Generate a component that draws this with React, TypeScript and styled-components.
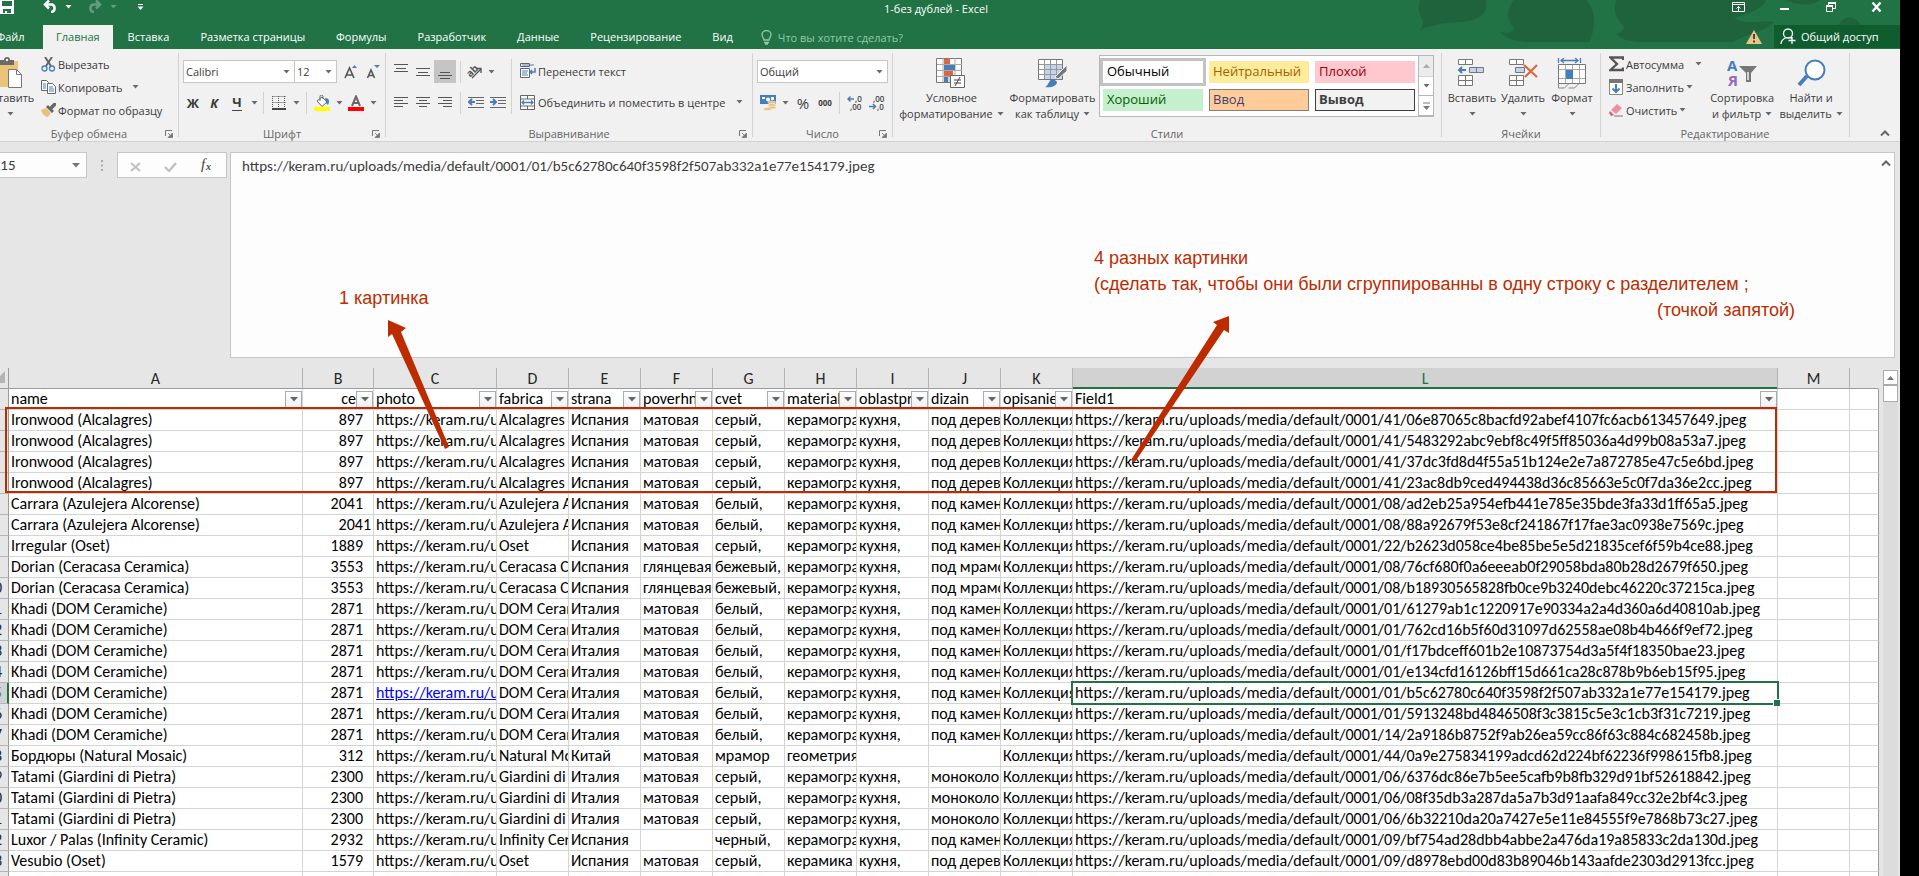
import React from 'react';
import styled, { createGlobalStyle, css } from 'styled-components';

const ui = '"Open Sans", "Noto Sans", sans-serif';
const sheet = 'Calibri, Carlito, Lato, sans-serif';
const green = '#217346';
const red = '#bc2c00';
const blue = '#457eba';

const GlobalStyle = createGlobalStyle`
  * { box-sizing: border-box; }
  html, body, #root { height: 100%; }
  body { margin: 0; background: #000; overflow: hidden; font-family: ${ui}; font-size: 11px; color: #3c3c3c; }
  button, input, select, textarea { font: inherit; color: inherit; margin: 0; padding: 0; border: 0; background: none; border-radius: 0; outline: 0; }
  svg { display: block; flex: none; }
`;

/* ---------- window ---------- */

const Window = styled.main`
  position: relative;
  display: flex;
  flex-direction: column;
  height: 100vh;
  margin-right: 19px;
  overflow: hidden;
  background: #e6e6e6;
`;

const Head = styled.header`
  position: relative;
  flex: none;
  color: #fff;
  background: ${green};
`;

const HeadPattern = styled.svg`
  position: absolute;
  top: 0;
  right: 0;
`;

const TitleBar = styled.div`
  position: relative;
  display: grid;
  grid-template-columns: 1fr auto 1fr;
  height: 25px;
  padding-right: 16px;
`;

const QuickAccess = styled.div`
  display: flex;
  align-items: flex-start;
`;

const QuickButton = styled.button<{ $w: number; $dim?: boolean }>`
  display: flex;
  width: ${p => p.$w}px;
  color: #fff;
  opacity: ${p => (p.$dim ? 0.3 : 1)};
`;

const Title = styled.h1`
  margin: 0;
  padding-right: 12px;
  font-size: 11px;
  font-weight: 400;
  line-height: 18px;
`;

const WindowButtons = styled.div`
  display: flex;
  justify-content: flex-end;
  gap: 32px;
  padding-top: 1px;
`;

const WindowButton = styled.button`
  display: flex;
  width: 14px;
  height: 14px;
  color: #fff;
`;

const TabBar = styled.nav`
  position: relative;
  display: flex;
  align-items: stretch;
  height: 24px;
`;

const Tab = styled.button<{ $active?: boolean; $file?: boolean }>`
  padding: 0 16px 0 15px;
  color: #fff;
  line-height: 24px;
  white-space: nowrap;
  ${p => p.$active && css`padding: 0 13px; color: ${green}; background: #f1f1f1;`}
  ${p => p.$file && css`width: 64px; margin-left: -21px; text-align: center;`}
`;

const Tell = styled.label`
  display: flex;
  align-items: center;
  gap: 6px;
  margin-left: 12px;
  flex: 1;
  color: #a0d0b0;
`;

const TellInput = styled.input`
  width: 160px;
  color: #a0d0b0;
  &::placeholder { color: #92c9a6; opacity: 1; }
`;

const Share = styled.button`
  display: flex;
  align-items: center;
  gap: 4px;
  width: 126px;
  height: 23px;
  margin-left: 12px;
  padding-left: 6px;
  color: #fff;
  background: #0f5c2f;
`;

/* ---------- ribbon ---------- */

const Ribbon = styled.section`
  display: flex;
  flex: none;
  height: 93px;
  border-bottom: 1px solid #d2d2d2;
  background: #f1f1f1;
`;

const GroupBox = styled.div<{ $w: number }>`
  display: flex;
  flex-direction: column;
  flex: none;
  width: ${p => p.$w}px;
  height: 84px;
  margin-top: 4px;
  border-right: 1px solid #d2d2d2;
`;

const GroupBody = styled.div`
  display: flex;
  flex: 1;
`;

const GroupFoot = styled.div`
  display: grid;
  grid-template-columns: 16px 1fr 16px;
  align-items: center;
  height: 16px;
  margin-bottom: -4px;
  flex: none;
  color: #666;
  text-align: center;
`;

const Stack = styled.div<{ $pad?: number }>`
  display: flex;
  flex-direction: column;
  padding-left: ${p => p.$pad ?? 0}px;
`;

const TwoRows = styled.div<{ $pad?: number }>`
  display: flex;
  flex-direction: column;
  gap: 8px;
  padding: 7px 0 0 ${p => p.$pad ?? 0}px;
`;

const Row = styled.div<{ $gap?: number }>`
  display: flex;
  align-items: center;
  gap: ${p => p.$gap ?? 0}px;
  height: 23px;
`;

const SmallButton = styled.button`
  display: flex;
  align-items: center;
  gap: 2px;
  height: 23px;
  padding-bottom: 1px;
  white-space: nowrap;
`;

const IconButton = styled.button<{ $w?: number; $on?: boolean }>`
  display: flex;
  align-items: center;
  justify-content: center;
  width: ${p => p.$w ?? 22}px;
  height: 23px;
  background: ${p => (p.$on ? '#c5c5c5' : 'none')};
`;

const Glyph = styled.span<{ $size?: number; $italic?: boolean; $under?: boolean; $light?: boolean }>`
  font-size: ${p => p.$size ?? 13}px;
  font-weight: ${p => (p.$light ? 400 : 700)};
  line-height: 16px;
  font-style: ${p => (p.$italic ? 'italic' : 'normal')};
  border-bottom: ${p => (p.$under ? '1px solid #444' : '0')};
`;

const Split = styled.span<{ $h?: number; $m?: number }>`
  width: 1px;
  height: ${p => p.$h ?? 22}px;
  margin: 0 ${p => p.$m ?? 0}px;
  background: #d2d2d2;
`;

const TallSplit = styled.span`
  width: 1px;
  height: 55px;
  margin: 6px 0 0 2px;
  background: #d2d2d2;
`;

const BigButton = styled.button<{ $w: number; $clip?: boolean }>`
  display: flex;
  flex-direction: column;
  align-items: center;
  width: ${p => p.$w}px;
  height: 72px;
  padding-top: 3px;
  margin-left: ${p => (p.$clip ? -16 : 0)}px;
  line-height: 16px;
  white-space: nowrap;
`;

const BigIcon = styled.span`
  display: flex;
  justify-content: center;
  align-items: center;
  height: 34px;
`;

const BigCaret = styled.span`
  display: flex;
  align-items: center;
  gap: 4px;
  height: 16px;
`;

const Picker = styled.label<{ $w: number }>`
  position: relative;
  display: flex;
  align-items: center;
  width: ${p => p.$w}px;
  height: 23px;
  border: 1px solid #c6c6c6;
  background: #fff;
  & + & { margin-left: -1px; }
  svg { position: absolute; right: 4px; pointer-events: none; }
`;

const PickerSelect = styled.select`
  width: 100%;
  height: 21px;
  padding-left: 2px;
  appearance: none;
`;

const Gallery = styled.div`
  display: flex;
  width: 335px;
  height: 62px;
  margin: 2px 0 0 4px;
  border: 1px solid #b4b8bc;
  background: #fff;
`;

const GalleryGrid = styled.div`
  display: grid;
  flex: 1;
  grid-template-columns: repeat(3, 100px);
  grid-auto-rows: 22px;
  gap: 6px;
  padding: 5px 0 0 3px;
`;

const StyleCell = styled.button<{ $bg: string; $fg: string; $line?: string; $bold?: boolean; $on?: boolean }>`
  padding: 0 0 2px 3px;
  text-align: left;
  font-size: 13px;
  line-height: 18px;
  font-weight: ${p => (p.$bold ? 700 : 400)};
  color: ${p => p.$fg};
  background: ${p => p.$bg};
  border: 1px solid ${p => p.$line ?? p.$bg};
  ${p => p.$on && css`outline: 3px solid #c3c3c3;`}
`;

const GallerySide = styled.div`
  display: grid;
  grid-template-rows: 21px 19px 20px;
  width: 15px;
  border-left: 1px solid #b4b8bc;
`;

const GalleryStep = styled.button<{ $off?: boolean }>`
  display: flex;
  align-items: center;
  justify-content: center;
  border-bottom: 1px solid #b4b8bc;
  background: ${p => (p.$off ? '#e1e1e1' : '#fff')};
  opacity: ${p => (p.$off ? 0.6 : 1)};
`;

const RibbonEnd = styled.div`
  display: flex;
  flex: 1;
  align-items: flex-end;
  justify-content: flex-end;
  padding: 0 8px 1px 0;
`;

/* ---------- formula bar ---------- */

const FormulaBar = styled.section`
  display: flex;
  flex: none;
  align-items: flex-start;
  height: 226px;
  padding: 10px 5px 10px 0;
`;

const NameBox = styled.label`
  display: flex;
  align-items: center;
  width: 107px;
  height: 26px;
  margin-left: -20px;
  padding: 0 6px 0 13px;
  border: 1px solid #c6c6c6;
  background: #fdfdfd;
  font-family: ${sheet};
  font-size: 15px;
`;

const NameInput = styled.input`
  flex: 1;
  min-width: 0;
`;

const Dots = styled.span`
  width: 30px;
  display: flex;
  justify-content: center;
  padding-top: 8px;
`;

const EntryButtons = styled.div`
  display: flex;
  align-items: center;
  justify-content: space-around;
  width: 110px;
  height: 26px;
  margin-right: 3px;
  border: 1px solid #c6c6c6;
  background: #fdfdfd;
`;

const FormulaBox = styled.div`
  display: flex;
  flex: 1;
  height: 206px;
  padding: 3px 1px 3px 11px;
  border: 1px solid #c6c6c6;
  background: #fdfdfd;
`;

const FormulaText = styled.textarea`
  flex: 1;
  resize: none;
  overflow: hidden;
  font-family: ${sheet};
  font-size: 15px;
  line-height: 20px;
`;

const PlainButton = styled.button`
  display: flex;
  justify-content: center;
  width: 14px;
  height: 14px;
  padding-top: 4px;
`;

/* ---------- sheet ---------- */

const SheetArea = styled.section`
  display: flex;
  flex: 1;
  min-height: 0;
  overflow: hidden;
`;

const GridClip = styled.div`
  flex: 1;
  min-width: 0;
  overflow: hidden;
`;

const Table = styled.table`
  width: calc(100% + 20px);
  margin-left: -20px;
  table-layout: fixed;
  border-collapse: separate;
  border-spacing: 0;
  font-family: ${sheet};
  font-size: 16px;
  line-height: 20px;
  color: #000;
`;

const ColHead = styled.th<{ $on?: boolean }>`
  height: 21px;
  padding: 2px 0 0;
  font-weight: 400;
  line-height: 18px;
  color: ${p => (p.$on ? green : '#262626')};
  background: ${p => (p.$on ? '#d2d2d2' : '#e6e6e6')};
  border-right: 1px solid #b4b4b4;
  border-bottom: 1px solid ${p => (p.$on ? green : '#9b9b9b')};
  box-shadow: ${p => (p.$on ? `inset 0 -1px ${green}` : 'none')};
  &:last-child { border-right-color: #e6e6e6; }
`;

const Corner = styled.td`
  border-right: 1px solid #9b9b9b;
  border-bottom: 1px solid #9b9b9b;
  padding: 0 3px 3px 0;
  svg { margin-left: auto; }
`;

const RowHead = styled.th<{ $on?: boolean }>`
  height: 21px;
  padding: 0;
  font-weight: 400;
  text-align: center;
  color: ${p => (p.$on ? green : '#262626')};
  background: ${p => (p.$on ? '#d2d2d2' : '#e6e6e6')};
  border-right: ${p => (p.$on ? `2px solid ${green}` : '1px solid #9b9b9b')};
  border-bottom: 1px solid #b4b4b4;
`;

const Cell = styled.td<{ $sel?: boolean }>`
  height: 21px;
  padding: 0;
  background: #fff;
  border-right: 1px solid #d4d4d4;
  border-bottom: 1px solid #d4d4d4;
  &:last-child { border-right-color: #9b9b9b; }
  ${p => p.$sel && css`
    position: relative;
    &::before {
      content: '';
      position: absolute;
      inset: -2px -2px -2px -2px;
      border: 2px solid ${green};
    }
    &::after {
      content: '';
      position: absolute;
      right: -3px;
      bottom: -3px;
      width: 6px;
      height: 6px;
      border: solid #fff;
      border-width: 1px 0 0 1px;
      background: ${green};
    }
  `}
`;

const CellText = styled.div<{ $num?: boolean; $tight?: boolean }>`
  height: 20px;
  padding: 0 ${p => (p.$num && !p.$tight ? 10 : p.$num ? 2 : 0)}px 0 2px;
  overflow: hidden;
  white-space: nowrap;
  text-align: ${p => (p.$num ? 'right' : 'left')};
`;

const CellLink = styled.a`
  color: #0000ff;
`;

const FilterCell = styled.div`
  display: flex;
  height: 20px;
`;

const FilterName = styled.span<{ $right?: boolean }>`
  flex: 1;
  min-width: 0;
  padding-left: 2px;
  overflow: hidden;
  white-space: nowrap;
  text-align: ${p => (p.$right ? 'right' : 'left')};
`;

const FilterButton = styled.button`
  display: flex;
  align-items: center;
  justify-content: center;
  flex: none;
  width: 17px;
  height: 17px;
  margin-top: 2px;
  border: 1px solid #a6abb5;
  background: linear-gradient(#fff, #eef0f4);
`;

const ScrollBar = styled.div`
  display: flex;
  flex-direction: column;
  flex: none;
  width: 15px;
  margin: 2px 2px 0 4px;
  background: #dcdcdc;
`;

const ScrollUp = styled.button`
  display: flex;
  align-items: center;
  justify-content: center;
  height: 15px;
  border: 1px solid #ababab;
  background: #fff;
`;

const ScrollThumb = styled.span`
  height: 17px;
  border: 1px solid #ababab;
  background: #fff;
`;

/* ---------- notes drawn over the sheet ---------- */

const Frame = styled.div`
  position: absolute;
  left: 5px;
  top: 407px;
  width: 1772px;
  height: 86px;
  border: 2px solid ${red};
  pointer-events: none;
`;

const Note = styled.p<{ $x: number; $y: number }>`
  position: absolute;
  left: ${p => p.$x}px;
  top: ${p => p.$y}px;
  margin: 0;
  color: ${red};
  font-family: "Liberation Sans", Arial, sans-serif;
  font-size: 18px;
  line-height: 26px;
  white-space: nowrap;
`;

const NoteEnd = styled.span`
  display: block;
  width: 701px;
  text-align: right;
`;

const Arrows = styled.svg`
  position: absolute;
  left: 0;
  top: 0;
  pointer-events: none;
`;

/* ---------- icons ---------- */

const Caret = ({ c = '#6a6a6a' }: { c?: string }) => (
  <svg width="7" height="4" viewBox="0 0 7 4"><path d="M0.5 0h6l-3 3.5z" fill={c} /></svg>
);
const CaretUp = () => <svg width="7" height="4"><path d="M0 4h7l-3.500-4z" fill="#777" /></svg>;
const ChevronUp = () => (
  <svg width="10" height="6"><path d="M1 5.500l4-4 4 4" fill="none" stroke="#666" strokeWidth="2" /></svg>
);
const Launcher = () => (
  <svg width="8" height="8"><path d="M.5 6V.5H7" stroke="#777" fill="none" /><path d="M3 3l3 3M7.500 3v4.500H3z" stroke="#777" fill="#777" strokeWidth=".8" /></svg>
);
const SaveIcon = () => (
  <svg width="14" height="14"><path fillRule="evenodd" d="M0 0h14v14H0zM2 1v5h10V1zM3 9v4h2v-2h2v2h4V9z" fill="#fff" /></svg>
);
const UndoIcon = ({ flip }: { flip?: boolean }) => (
  <svg width="15" height="13" viewBox="0 0 15 13">
    <g transform={flip ? 'translate(15 0) scale(-1 1)' : undefined} fill="none" stroke="#fff" strokeWidth="2.500">
      <path d="M2 4.500h7a4 4 0 0 1 0 7.500H8" /><path d="M6 .5l-4 4 4 4" />
    </g>
  </svg>
);

const PasteIcon = () => (
  <svg width="34" height="32" viewBox="0 0 34 32">
    <path d="M3 4h22v26H3z" fill="#ecc478" /><path d="M7 3h4a3 3 0 0 1 6 0h4v5H7z" fill="#6a6a6a" /><circle cx="14" cy="3" r="1.200" fill="#f1f1f1" />
    <path d="M15.500 12.500h8l5 5v13h-13z" fill="#fff" stroke="#777" /><path d="M23.500 12.500v5h5" fill="none" stroke="#777" />
  </svg>
);
const CutIcon = () => (
  <svg width="15" height="15"><path d="M4 0l6 9M11 0L5 9" stroke="#666" strokeWidth="2" /><circle cx="3.500" cy="11.500" r="2.500" fill="none" stroke={blue} strokeWidth="1.300" /><circle cx="11" cy="11.500" r="2.500" fill="none" stroke={blue} strokeWidth="1.300" /></svg>
);
const CopyIcon = () => (
  <svg width="15" height="14"><path d="M.5.500h5l2 2v8h-7z" fill="#fff" stroke="#666" /><path d="M2 4h3M2 6h3M2 8h3" stroke={blue} /><path d="M6.500 3.500h5l3 3v7h-8z" fill="#fff" stroke="#666" /><path d="M8 7h4M8 9h5M8 11h5" stroke={blue} /></svg>
);
const BrushIcon = () => (
  <svg width="15" height="14"><path d="M0 7l5-2 5 5-3 4c-3 0-6-3-7-7z" fill="#ecc07a" /><path d="M5 4l2-2 6 6-2 2z" fill="#666" /><path d="M10 4l4-4 1 1-4 4z" stroke="#666" strokeWidth="2" /></svg>
);
const AlignIcon = ({ kind }: { kind: string }) => {
  const rows: Record<string, string> = {
    top: 'M0 .5h14M2 4.500h10M0 7.500h14', mid: 'M0 4.500h14M2 8.500h10M0 11.500h14', bottom: 'M2 8.500h10M0 11.500h14M2 14.500h10',
    left: 'M0 2.500h14M0 5.500h9M0 8.500h14M0 11.500h9', center: 'M0 2.500h14M3 5.500h8M0 8.500h14M3 11.500h8', right: 'M0 2.500h14M5 5.500h9M0 8.500h14M5 11.500h9',
  };
  return <svg width="14" height="16"><path d={rows[kind]} stroke="#555" /></svg>;
};
const OrientIcon = () => (
  <svg width="16" height="16"><text x="0" y="10" fontSize="10" fontWeight="700" fill="#555" transform="rotate(-45 6 8)">ab</text><path d="M5 14L14 5M14 9V4.500H9.500" stroke="#555" fill="none" strokeWidth="1.300" /></svg>
);
const IndentIcon = ({ out }: { out?: boolean }) => (
  <svg width="16" height="14"><path d="M0 1.500h16M8 4.500h8M8 7.500h8M0 11.500h16" stroke="#666" />
    {out ? <path d="M7 6H1M4 3L1 6l3 3" stroke={blue} fill="none" strokeWidth="2" /> : <path d="M0 6h6M3 3l3 3-3 3" stroke={blue} fill="none" strokeWidth="2" />}
  </svg>
);
const WrapIcon = () => (
  <svg width="16" height="16"><path d="M.5.500h9v3h-9zM.5 5.500h9v9h-9z" fill="#fff" stroke="#666" /><path d="M2 2h12M2 8h6M2 10h5M2 12h6" stroke={blue} /><path d="M15 5v4h-5M12 7l-2 2 2 2" fill="none" stroke={blue} strokeWidth="1.500" /></svg>
);
const MergeIcon = () => (
  <svg width="16" height="15"><path d="M.5.500h14v14H.5zM.5 4h14M.5 11h14M7.500.500V4M7.500 11v3" fill="#fff" stroke="#666" /><path d="M2 7.500h11M4 5.500l-2 2 2 2M11 5.500l2 2-2 2" fill="none" stroke={blue} strokeWidth="1.300" /></svg>
);
const BordersIcon = () => <svg width="14" height="14"><path d="M.5.500h13M.5 6.500h13M.5 0v13M6.500 0v13M12.500 0v13" stroke="#555" strokeDasharray="1 1" /><path d="M0 13h14" stroke="#444" strokeWidth="2" /></svg>;
const FillIcon = () => (
  <svg width="16" height="16"><path d="M3 6l5-4 5 5-5 4.500z" fill="#fff" stroke="#666" /><path d="M6 6V1.500a1.500 1.500 0 0 1 3 0V4" fill="none" stroke="#666" /><path d="M11 3c4 0 5 3 3 7l-2-2z" fill={blue} /><path d="M0 12h16v4H0z" fill="#ff0" /></svg>
);
const FontColorIcon = () => (
  <svg width="16" height="16"><path d="M4 11L8 1.500 12 11M5.500 8h5" stroke="#666" strokeWidth="2" fill="none" /><path d="M0 12h16v4H0z" fill="red" /></svg>
);
const GrowIcon = ({ down }: { down?: boolean }) => (
  <svg width="14" height="14"><path d={down ? 'M1.500 13L5 5l3.500 8M3 10.500h4' : 'M1 13L5.500 3 10 13M2.500 10h6'} stroke="#555" strokeWidth="1.600" fill="none" /><path d={down ? 'M8 0h6l-3 3z' : 'M8 3h5l-2.500-3z'} fill={blue} /></svg>
);
const MoneyIcon = () => (
  <svg width="17" height="16"><path d="M0 0h16v9H0z" fill={blue} /><path d="M2 2h3v2H2zM11 2h3v3h-3z" fill="#fff" /><circle cx="8" cy="4.500" r="2" fill="#fff" /><g fill="#eabf78" stroke="#f1f1f1" strokeWidth=".6"><ellipse cx="12" cy="7.500" rx="4" ry="1.500" /><ellipse cx="12" cy="10" rx="4" ry="1.500" /><ellipse cx="12" cy="12.500" rx="4" ry="1.500" /><ellipse cx="7.500" cy="14" rx="4" ry="1.500" /></g></svg>
);
const DecimalIcon = ({ less }: { less?: boolean }) => (
  <svg width="16" height="16">
    <text x={less ? 4 : 8} y="7" fontSize="8" fontWeight="600" fill="#444">{less ? ',00' : ',0'}</text>
    <text x={less ? 8 : 3} y="15" fontSize="8" fontWeight="600" fill="#444">{less ? ',0' : ',00'}</text>
    {less ? <path d="M0 11.500h6M4 9l2.500 2.500L4 14" stroke={blue} fill="none" strokeWidth="1.500" /> : <path d="M7 4H1M3.500 1.500L1 4l2.500 2.500" stroke={blue} fill="none" strokeWidth="1.500" />}
  </svg>
);
const CondIcon = () => (
  <svg width="31" height="31"><path d="M.5.500h25v24H.5z" fill="#fff" stroke="#777" /><path d="M7 0v24M13 0v24M19 0v24M1 6.500h25M1 12.500h25M1 18.500h25" stroke="#aaa" /><path d="M8 1h6v5H8zM8 13h9v5H8z" fill="#dd6641" /><path d="M8 7h11v5H8zM8 19h4v5H8z" fill={blue} /><path d="M14.500 17.500h14v12h-14z" fill="#fff" stroke="#666" /><path d="M18 22h7M18 25h7M24 19l-5 9" stroke="#444" /></svg>
);
const TableIcon = () => (
  <svg width="32" height="30"><path d="M1.500 1.500h24v20h-24z" fill="#fff" stroke="#777" /><path d="M8 7h17v14H8z" fill="#c3d5ec" /><path d="M7.500 2v19M13.500 2v19M19.500 2v19M2 6.500h23M2 11.500h23M2 16.500h23" stroke="#999" /><path d="M30 7v6l-9 8-3-2z" fill="#777" stroke="#f1f1f1" /><path d="M8 29c4-1 3-8 9-8l3 3c0 4-6 6-12 5z" fill={blue} /></svg>
);
const InsertIcon = ({ del }: { del?: boolean }) => (
  <svg width="30" height="30"><path d="M1.500 1.500h14v5h-14zM8.500 1.500v5M1.500 17.500h14v10h-14zM8.500 17.500v10M1.500 22.500h14" fill="#fff" stroke="#777" />
    {del ? <><path d="M7.500 9.500h9v5h-9z" fill="#c3d5ec" stroke="#777" /><path d="M16 7l13 12M29 7L17 19" stroke="#dd6641" strokeWidth="2.200" /></>
      : <><path d="M12.500 9.500h14v5h-14zM19.500 9.500v5" fill="#c3d5ec" stroke="#777" /><path d="M9 12H2M5 9l-3 3 3 3" stroke={blue} fill="none" strokeWidth="2" /></>}
  </svg>
);
const FormatIcon = () => (
  <svg width="30" height="31"><path d="M1.500 0v5M23.500 0v5M4 2.500h17M7 0L4 2.500 7 5M18 0l3 2.500L18 5" stroke={blue} fill="none" strokeWidth="1.300" /><path d="M1.500 6.500h27v19h-27z" fill="#fff" stroke="#777" /><path d="M8.500 7v18M15.500 7v18M22.500 7v18M2 11.500h26M2 20.500h26" stroke="#aaa" /><path d="M9 12h7v9H9z" fill={blue} /><path d="M1.500 26v4h6l4-4M11.500 30h6l4-4" stroke="#888" fill="none" /></svg>
);
const SumIcon = () => <svg width="15" height="16"><path d="M14 4V1.500H1.500L8 8l-6.500 6H14V11.500" fill="none" stroke="#555" strokeWidth="2.300" /></svg>;
const FillDownIcon = () => <svg width="15" height="16"><path d="M.5.500h13v15H.5z" fill="#fff" stroke="#888" /><path d="M0 0h14v4H0z" fill="#777" /><path d="M7 5v8M3.500 9.500L7 13l3.500-3.500" stroke={blue} fill="none" strokeWidth="2" /></svg>;
const EraseIcon = () => <svg width="15" height="14"><path d="M8 1l5 4-6 6-5-4z" fill="#ee8fa0" /><path d="M1 8l4 4-3 1-2-3z" fill="#e05a70" /><path d="M5 13h9" stroke="#777" /></svg>;
const SortIcon = () => (
  <svg width="30" height="30"><text x="0" y="13" fontSize="15" fontWeight="700" fill={blue}>А</text><text x="1" y="28" fontSize="15" fontWeight="700" fill="#9a64b8">Я</text><path d="M12 8h18l-6 7v9h-5v-9z" fill="#777" /><path d="M21 14v8" stroke="#f1f1f1" strokeWidth="1.500" /></svg>
);
const FindIcon = () => <svg width="29" height="30"><path d="M2 27l8-9" stroke={blue} strokeWidth="4" /><circle cx="18" cy="12" r="9.500" fill="#fff" stroke={blue} strokeWidth="2" /></svg>;
const WarnIcon = () => <svg width="16" height="14"><path d="M8 0l8 14H0z" fill="#eec486" /><path d="M8 4v5M8 10.500v2" stroke="#444" strokeWidth="2" /></svg>;
const PersonIcon = () => <svg width="17" height="17"><circle cx="8" cy="5.500" r="4.500" fill="none" stroke="#fff" strokeWidth="1.300" /><path d="M1 16c0-3 2-5 4.500-6M10.500 9.500l2 2M12 9v7M8.500 12.500h7" fill="none" stroke="#fff" strokeWidth="1.300" /></svg>;
const BulbIcon = () => <svg width="11" height="15"><path d="M3 10C3 8 1 7.500 1 4.500a4.500 4 0 0 1 9 0C10 7.500 8 8 8 10zM3 12.500h5M4 14h3" fill="none" stroke="#92c9a6" strokeWidth="1.300" /></svg>;

/* ---------- data ---------- */

const columns: [string, number, string][] = [
  ['A', 294, 'name'], ['B', 71, 'cena'], ['C', 123, 'photo'], ['D', 72, 'fabrica'], ['E', 72, 'strana'], ['F', 72, 'poverhnost'],
  ['G', 72, 'cvet'], ['H', 72, 'material'], ['I', 72, 'oblastprim'], ['J', 72, 'dizain'], ['K', 72, 'opisanie'], ['L', 705, 'Field1'], ['M', 72, ''],
];

const url = 'https://keram.ru/uploads/media/default/0001/';
const iron = ['Ironwood (Alcalagres)', '897', 'Alcalagres', 'Испания', 'матовая', 'серый,', 'керамогранит', 'кухня,', 'под дерево', 'Коллекция'];
const carrara = ['Carrara (Azulejera Alcorense)', '2041', 'Azulejera Alcorense', 'Испания', 'матовая', 'белый,', 'керамогранит', 'кухня,', 'под камень', 'Коллекция'];
const dorian = ['Dorian (Ceracasa Ceramica)', '3553', 'Ceracasa Ceramica', 'Испания', 'глянцевая', 'бежевый,', 'керамогранит', 'кухня,', 'под мрамор', 'Коллекция'];
const khadi = ['Khadi (DOM Ceramiche)', '2871', 'DOM Ceramiche', 'Италия', 'матовая', 'белый,', 'керамогранит', 'кухня,', 'под камень', 'Коллекция'];
const tatami = ['Tatami (Giardini di Pietra)', '2300', 'Giardini di Pietra', 'Италия', 'матовая', 'серый,', 'керамогранит', 'кухня,', 'моноколор', 'Коллекция'];

const rows: [string[], string][] = [
  [iron, '41/06e87065c8bacfd92abef4107fc6acb613457649'],
  [iron, '41/5483292abc9ebf8c49f5ff85036a4d99b08a53a7'],
  [iron, '41/37dc3fd8d4f55a51b124e2e7a872785e47c5e6bd'],
  [iron, '41/23ac8db9ced494438d36c85663e5c0f7da36e2cc'],
  [carrara, '08/ad2eb25a954efb441e785e35bde3fa33d1ff65a5'],
  [carrara, '08/88a92679f53e8cf241867f17fae3ac0938e7569c'],
  [['Irregular (Oset)', '1889', 'Oset', 'Испания', 'матовая', 'серый,', 'керамогранит', 'кухня,', 'под камень', 'Коллекция'], '22/b2623d058ce4be85be5e5d21835cef6f59b4ce88'],
  [dorian, '08/76cf680f0a6eeeab0f29058bda80b28d2679f650'],
  [dorian, '08/b18930565828fb0ce9b3240debc46220c37215ca'],
  [khadi, '01/61279ab1c1220917e90334a2a4d360a6d40810ab'],
  [khadi, '01/762cd16b5f60d31097d62558ae08b4b466f9ef72'],
  [khadi, '01/f17bdceff601b2e10873754d3a5f4f18350bae23'],
  [khadi, '01/e134cfd16126bff15d661ca28c878b9b6eb15f95'],
  [khadi, '01/b5c62780c640f3598f2f507ab332a1e77e154179'],
  [khadi, '01/5913248bd4846508f3c3815c5e3c1cb3f31c7219'],
  [khadi, '14/2a9186b8752f9ab26ea59cc86f63c884c682458b'],
  [['Бордюры (Natural Mosaic)', '312', 'Natural Mosaic', 'Китай', 'матовая', 'мрамор', 'геометрия', '', '', 'Коллекция'], '44/0a9e275834199adcd62d224bf62236f998615fb8'],
  [tatami, '06/6376dc86e7b5ee5cafb9b8fb329d91bf52618842'],
  [tatami, '06/08f35db3a287da5a7b3d91aafa849cc32e2bf4c3'],
  [tatami, '06/6b32210da20a7427e5e11e84555f9e7868b73c27'],
  [['Luxor / Palas (Infinity Ceramic)', '2932', 'Infinity Ceramic', 'Испания', '', 'черный,', 'керамогранит', 'кухня,', 'под камень', 'Коллекция'], '09/bf754ad28dbb4abbe2a476da19a85833c2da130d'],
  [['Vesubio (Oset)', '1579', 'Oset', 'Испания', 'матовая', 'серый,', 'керамика', 'кухня,', 'под дерево', 'Коллекция'], '09/d8978ebd00d83b89046b143aafde2303d2913fcc'],
];

/* ---------- composed parts ---------- */

const Group = ({ w, label, launch, children }: { w: number; label: string; launch?: boolean; children: React.ReactNode }) => (
  <GroupBox $w={w}>
    <GroupBody>{children}</GroupBody>
    <GroupFoot><span /><span>{label}</span>{launch && <PlainButton aria-label={label}><Launcher /></PlainButton>}</GroupFoot>
  </GroupBox>
);

const Big = ({ w, icon, lines, clip }: { w: number; icon: React.ReactNode; lines: string[]; clip?: boolean }) => (
  <BigButton $w={w} $clip={clip}>
    <BigIcon>{icon}</BigIcon>
    <span>{lines[0]}</span>
    <BigCaret>{lines[1]}<Caret /></BigCaret>
  </BigButton>
);

const Pick = ({ w, label, value }: { w: number; label: string; value: string }) => (
  <Picker $w={w}><PickerSelect aria-label={label}><option>{value}</option></PickerSelect><Caret /></Picker>
);

const tabs = ['Вставка', 'Разметка страницы', 'Формулы', 'Разработчик', 'Данные', 'Рецензирование', 'Вид'];

export default function App() {
  return (
    <>
      <GlobalStyle />
      <Window>
        <Head>
          <HeadPattern width="520" height="45" viewBox="0 0 520 45">
            <g fill="#1f633d">
              <path d="M40 0h66c2 12-4 20-24 22-20 0-30 4-42 8 4-6 4-8 2-12-4-6-4-12-2-18z" />
              <path d="M134 0h72c10 10 10 24 4 42h-60c-14 0-26-4-30-10 8 2 14 0 14-4-8-8-8-20 0-28z" />
              <path d="M236 0h150c-4 10-20 14-32 18 14 8 26 2 40 4-12 12-30 12-40 20H262c-10 0-20-2-26-8 6-2 8-4 8-8-10-8-10-16-8-26z" />
              <path d="M406 0h34c-6 6-22 6-34 0zM458 28c2-14 20-14 24 0z" />
            </g>
          </HeadPattern>
          <TitleBar>
            <QuickAccess>
              <QuickButton $w={43} aria-label="Сохранить"><SaveIcon /></QuickButton>
              <QuickButton $w={22} aria-label="Отменить"><UndoIcon /></QuickButton>
              <QuickButton $w={22} aria-label="Список отмены"><svg width="7" height="9"><path d="M.5 5h6l-3 3.500z" fill="#fff" /></svg></QuickButton>
              <QuickButton $w={23} $dim aria-label="Вернуть"><UndoIcon flip /></QuickButton>
              <QuickButton $w={27} $dim aria-label="Список возврата"><svg width="7" height="9"><path d="M.5 5h6l-3 3.500z" fill="#fff" /></svg></QuickButton>
              <QuickButton $w={14} aria-label="Настройка панели"><svg width="7" height="11"><path d="M1 4.500h5" stroke="#fff" /><path d="M.5 6.500h6l-3 3.500z" fill="#fff" /></svg></QuickButton>
            </QuickAccess>
            <Title>1-без дублей - Excel</Title>
            <WindowButtons>
              <WindowButton aria-label="Параметры ленты"><svg width="14" height="12"><path d="M.5 1.500h12v9H.5zM.5 3.500h12M6.500 10V5.500M4.500 7.500l2-2 2 2" fill="none" stroke="#fff" /></svg></WindowButton>
              <WindowButton aria-label="Свернуть"><svg width="14" height="12"><path d="M2 8h9" stroke="#fff" strokeWidth="2" /></svg></WindowButton>
              <WindowButton aria-label="Окно"><svg width="14" height="12"><path d="M4.500 4V1.500h7v6H9M2.500 4.500h6v6h-6z" fill="none" stroke="#fff" /><path d="M4 2h8M2 5h7" stroke="#fff" strokeWidth="2" /></svg></WindowButton>
              <WindowButton aria-label="Закрыть"><svg width="14" height="12"><path d="M2.500 1.500l8 9M10.500 1.500l-8 9" stroke="#fff" strokeWidth="2.300" /></svg></WindowButton>
            </WindowButtons>
          </TitleBar>
          <TabBar>
            <Tab $file>Файл</Tab>
            <Tab $active>Главная</Tab>
            {tabs.map(t => <Tab key={t}>{t}</Tab>)}
            <Tell><BulbIcon /><TellInput aria-label="Помощник" placeholder="Что вы хотите сделать?" /></Tell>
            <IconButton $w={16} aria-label="Предупреждение"><WarnIcon /></IconButton>
            <Share><PersonIcon />Общий доступ</Share>
          </TabBar>
        </Head>

        <Ribbon>
          <Group w={179} label="Буфер обмена" launch>
            <Big w={52} clip icon={<PasteIcon />} lines={['Вставить']} />
            <Stack $pad={5}>
              <SmallButton><CutIcon />Вырезать</SmallButton>
              <SmallButton><CopyIcon />Копировать<Split $h={0} $m={2} /><Caret /></SmallButton>
              <SmallButton><BrushIcon />Формат по образцу</SmallButton>
            </Stack>
          </Group>

          <Group w={207} label="Шрифт" launch>
            <TwoRows $pad={4}>
              <Row>
                <Pick w={112} label="Шрифт" value="Calibri" />
                <Pick w={43} label="Размер" value="12" />
                <Split $h={0} $m={1} />
                <IconButton aria-label="Увеличить"><GrowIcon /></IconButton>
                <IconButton aria-label="Уменьшить"><GrowIcon down /></IconButton>
              </Row>
              <Row>
                <IconButton $w={20} aria-label="Полужирный"><Glyph>Ж</Glyph></IconButton>
                <IconButton $w={22} aria-label="Курсив"><Glyph $italic>К</Glyph></IconButton>
                <IconButton $w={24} aria-label="Подчёркнутый"><Glyph $under>Ч</Glyph></IconButton>
                <IconButton $w={10} aria-label="Вид подчёркивания"><Caret /></IconButton>
                <Split $m={4} />
                <IconButton aria-label="Границы"><BordersIcon /></IconButton>
                <IconButton $w={12} aria-label="Вид границ"><Caret /></IconButton>
                <Split $m={4} />
                <IconButton aria-label="Заливка"><FillIcon /></IconButton>
                <IconButton $w={12} aria-label="Цвет заливки"><Caret /></IconButton>
                <IconButton aria-label="Цвет текста"><FontColorIcon /></IconButton>
                <IconButton $w={12} aria-label="Выбор цвета"><Caret /></IconButton>
              </Row>
            </TwoRows>
          </Group>

          <Group w={367} label="Выравнивание" launch>
            <TwoRows $pad={4}>
              <Row>
                <IconButton aria-label="По верхнему краю"><AlignIcon kind="top" /></IconButton>
                <IconButton aria-label="По середине"><AlignIcon kind="mid" /></IconButton>
                <IconButton $on aria-label="По нижнему краю"><AlignIcon kind="bottom" /></IconButton>
                <Split $m={4} />
                <IconButton $w={20} aria-label="Ориентация"><OrientIcon /></IconButton>
                <IconButton $w={12} aria-label="Вид ориентации"><Caret /></IconButton>
              </Row>
              <Row>
                <IconButton aria-label="По левому краю"><AlignIcon kind="left" /></IconButton>
                <IconButton aria-label="По центру"><AlignIcon kind="center" /></IconButton>
                <IconButton aria-label="По правому краю"><AlignIcon kind="right" /></IconButton>
                <Split $m={4} />
                <IconButton aria-label="Уменьшить отступ"><IndentIcon out /></IconButton>
                <IconButton aria-label="Увеличить отступ"><IndentIcon /></IconButton>
              </Row>
            </TwoRows>
            <TallSplit />
            <TwoRows $pad={8}>
              <SmallButton><WrapIcon />Перенести текст</SmallButton>
              <SmallButton><MergeIcon />Объединить и поместить в центре<Split $h={0} $m={3} /><Caret /></SmallButton>
            </TwoRows>
          </Group>

          <Group w={140} label="Число" launch>
            <TwoRows $pad={4}>
              <Row><Pick w={131} label="Числовой формат" value="Общий" /></Row>
              <Row>
                <IconButton aria-label="Денежный"><MoneyIcon /></IconButton>
                <IconButton $w={12} aria-label="Валюта"><Caret /></IconButton>
                <IconButton $w={24} aria-label="Процентный"><Glyph $size={15} $light>%</Glyph></IconButton>
                <IconButton $w={20} aria-label="С разделителями"><Glyph $size={8}>000</Glyph></IconButton>
                <Split $m={4} />
                <IconButton aria-label="Увеличить разрядность"><DecimalIcon /></IconButton>
                <IconButton aria-label="Уменьшить разрядность"><DecimalIcon less /></IconButton>
              </Row>
            </TwoRows>
          </Group>

          <Group w={549} label="Стили">
            <Big w={117} icon={<CondIcon />} lines={['Условное', 'форматирование']} />
            <Big w={85} icon={<TableIcon />} lines={['Форматировать', 'как таблицу']} />
            <Gallery>
              <GalleryGrid>
                <StyleCell $bg="#ffffff" $fg="#000" $on>Обычный</StyleCell>
                <StyleCell $bg="#ffeb9c" $fg="#9c6500">Нейтральный</StyleCell>
                <StyleCell $bg="#ffc7ce" $fg="#9c0006">Плохой</StyleCell>
                <StyleCell $bg="#c6efce" $fg="#006100">Хороший</StyleCell>
                <StyleCell $bg="#ffcc99" $fg="#3f3f76" $line="#7f7f7f">Ввод</StyleCell>
                <StyleCell $bg="#f2f2f2" $fg="#3f3f3f" $line="#3f3f3f" $bold>Вывод</StyleCell>
              </GalleryGrid>
              <GallerySide>
                <GalleryStep $off aria-label="Вверх"><CaretUp /></GalleryStep>
                <GalleryStep aria-label="Вниз"><Caret /></GalleryStep>
                <GalleryStep aria-label="Все стили"><svg width="7" height="8"><path d="M0 1h7" stroke="#777" /><path d="M0 4h7l-3.500 4z" fill="#777" /></svg></GalleryStep>
              </GallerySide>
            </Gallery>
          </Group>

          <Group w={159} label="Ячейки">
            <Split $h={0} $m={2} />
            <Big w={50} icon={<InsertIcon />} lines={['Вставить']} />
            <Big w={52} icon={<InsertIcon del />} lines={['Удалить']} />
            <Big w={46} icon={<FormatIcon />} lines={['Формат']} />
          </Group>

          <Group w={249} label="Редактирование">
            <Stack $pad={8}>
              <SmallButton><SumIcon />Автосумма<Split $h={0} $m={3} /><Caret /></SmallButton>
              <SmallButton><FillDownIcon />Заполнить<Caret /></SmallButton>
              <SmallButton><EraseIcon />Очистить<Caret /></SmallButton>
            </Stack>
            <Split $h={0} $m={1} />
            <Big w={74} icon={<SortIcon />} lines={['Сортировка', 'и фильтр']} />
            <Big w={64} icon={<FindIcon />} lines={['Найти и', 'выделить']} />
          </Group>
          <RibbonEnd><PlainButton aria-label="Свернуть ленту"><ChevronUp /></PlainButton></RibbonEnd>
        </Ribbon>

        <FormulaBar>
          <NameBox><NameInput aria-label="Имя ячейки" defaultValue="L15" /><svg width="8" height="5"><path d="M0 0h8l-4 4.500z" fill="#777" /></svg></NameBox>
          <Dots><svg width="2" height="12"><path d="M0 1h2M0 5.500h2M0 10h2" stroke="#aaa" strokeWidth="2" /></svg></Dots>
          <EntryButtons>
            <PlainButton aria-label="Отмена"><svg width="11" height="10"><path d="M1 1l9 8M10 1L1 9" stroke="#c0c0c0" strokeWidth="2" /></svg></PlainButton>
            <PlainButton aria-label="Ввод"><svg width="13" height="10"><path d="M1 5l4 4 7-8" stroke="#c0c0c0" strokeWidth="2.300" fill="none" /></svg></PlainButton>
            <IconButton $w={16} aria-label="Вставить функцию"><svg width="14" height="16"><text x="1" y="12" fontSize="15" fontStyle="italic" fontFamily="Liberation Serif, serif" fill="#444">f</text><text x="6" y="13" fontSize="10" fontStyle="italic" fontWeight="700" fontFamily="Liberation Serif, serif" fill="#444">x</text></svg></IconButton>
          </EntryButtons>
          <FormulaBox>
            <FormulaText aria-label="Строка формул" spellCheck={false} defaultValue={url + '01/b5c62780c640f3598f2f507ab332a1e77e154179.jpeg'} />
            <PlainButton aria-label="Свернуть строку"><ChevronUp /></PlainButton>
          </FormulaBox>
        </FormulaBar>

        <SheetArea>
          <GridClip>
            <Table>
              <colgroup>
                <col width={29} />
                {columns.map(c => <col key={c[0]} width={c[1]} />)}
                <col />
              </colgroup>
              <thead>
                <tr>
                  <Corner><svg width="12" height="12"><path d="M12 0v12H0z" fill="#b4b4b4" /></svg></Corner>
                  {columns.map(c => <ColHead key={c[0]} $on={c[0] === 'L'}>{c[0]}</ColHead>)}
                  <ColHead />
                </tr>
              </thead>
              <tbody>
                <tr>
                  <RowHead>1</RowHead>
                  {columns.map(([id, , name]) => (
                    <Cell key={id}>
                      {name && <FilterCell><FilterName $right={id === 'B'}>{id === 'B' ? 'ce' : name}</FilterName><FilterButton aria-label={'Фильтр ' + name}><svg width="8" height="5"><path d="M0 0h8l-4 4.500z" fill="#666" /></svg></FilterButton></FilterCell>}
                    </Cell>
                  ))}
                  <Cell />
                </tr>
                {rows.map(([r, hash], i) => (
                  <tr key={hash}>
                    <RowHead $on={i === 13}>{i + 2}</RowHead>
                    <Cell><CellText>{r[0]}</CellText></Cell>
                    <Cell><CellText $num $tight={i === 5}>{r[1]}</CellText></Cell>
                    <Cell><CellText>{i === 13 ? <CellLink href={url}>https://keram.ru/uploads</CellLink> : 'https://keram.ru/uploads'}</CellText></Cell>
                    {r.slice(2).map((v, k) => <Cell key={k}><CellText>{v}</CellText></Cell>)}
                    <Cell $sel={i === 13}><CellText>{url + hash}.jpeg</CellText></Cell>
                    <Cell /><Cell />
                  </tr>
                ))}
                <tr>
                  <RowHead>24</RowHead>
                  {columns.map(c => <Cell key={c[0]} />)}
                  <Cell />
                </tr>
              </tbody>
            </Table>
          </GridClip>
          <ScrollBar><ScrollUp aria-label="Прокрутить вверх"><CaretUp /></ScrollUp><ScrollThumb /></ScrollBar>
        </SheetArea>

        <Frame />
        <Arrows width="1300" height="470">
          <path d="M388 320l18 8-5 4 48 115-4 2-53-115-4 3z" fill={red} />
          <path d="M1229 316v17l-5-3-89 132-4-2 86-135-4-3z" fill={red} />
        </Arrows>
        <Note $x={339} $y={285}>1 картинка</Note>
        <Note $x={1094} $y={245}>
          4 разных картинки<br />
          (сделать так, чтобы они были сгруппированны в одну строку с разделителем ;
          <NoteEnd>(точкой запятой)</NoteEnd>
        </Note>
      </Window>
    </>
  );
}
